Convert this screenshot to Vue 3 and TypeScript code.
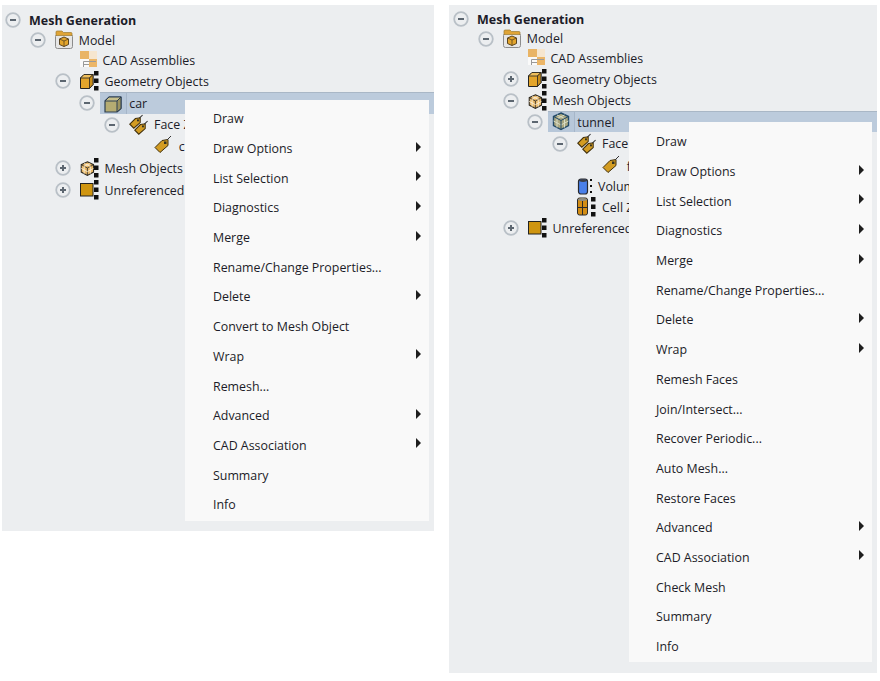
<script setup lang="ts">
interface Row {
  text: string
  level: number
  h: number
  toggle?: '+' | '-'
  icon?: string
  w?: number
  bold?: boolean
  sel?: boolean
}
interface Item { text: string; sub?: boolean }
interface Panel {
  id: string
  base: number
  rows: Row[]
  items: Item[]
}

const leftRows: Row[] = [
  { text: 'Mesh Generation', level: 0, h: 20, toggle: '-', bold: true },
  { text: 'Model', level: 1, h: 20, toggle: '-', icon: 'model', w: 24 },
  { text: 'CAD Assemblies', level: 2, h: 20, icon: 'cad', w: 23 },
  { text: 'Geometry Objects', level: 2, h: 22, toggle: '-', icon: 'geom', w: 25 },
  { text: 'car', level: 3, h: 22, toggle: '-', icon: 'car', w: 25, sel: true },
  { text: 'Face Zones', level: 4, h: 21, toggle: '-', icon: 'tags', w: 25 },
  { text: 'car', level: 5, h: 22, icon: 'tag', w: 25 },
  { text: 'Mesh Objects', level: 2, h: 22, toggle: '+', icon: 'mesh', w: 25 },
  { text: 'Unreferenced', level: 2, h: 22, toggle: '+', icon: 'unref', w: 25 }
]

const rightRows: Row[] = [
  { text: 'Mesh Generation', level: 0, h: 20, toggle: '-', bold: true },
  { text: 'Model', level: 1, h: 19, toggle: '-', icon: 'model', w: 24 },
  { text: 'CAD Assemblies', level: 2, h: 20, icon: 'cad', w: 23 },
  { text: 'Geometry Objects', level: 2, h: 22, toggle: '+', icon: 'geom', w: 25 },
  { text: 'Mesh Objects', level: 2, h: 21, toggle: '-', icon: 'mesh', w: 25 },
  { text: 'tunnel', level: 3, h: 21, toggle: '-', icon: 'tunnel', w: 25, sel: true },
  { text: 'Face Zones', level: 4, h: 23, toggle: '-', icon: 'tags', w: 25 },
  { text: 'fluid', level: 5, h: 22, icon: 'tag', w: 25 },
  { text: 'Volume Zones', level: 4, h: 19, icon: 'volume', w: 21 },
  { text: 'Cell Zones', level: 4, h: 22, icon: 'cell', w: 25 },
  { text: 'Unreferenced', level: 2, h: 20, toggle: '+', icon: 'unref', w: 25 }
]

const leftItems: Item[] = [
  { text: 'Draw' },
  { text: 'Draw Options', sub: true },
  { text: 'List Selection', sub: true },
  { text: 'Diagnostics', sub: true },
  { text: 'Merge', sub: true },
  { text: 'Rename/Change Properties...' },
  { text: 'Delete', sub: true },
  { text: 'Convert to Mesh Object' },
  { text: 'Wrap', sub: true },
  { text: 'Remesh...' },
  { text: 'Advanced', sub: true },
  { text: 'CAD Association', sub: true },
  { text: 'Summary' },
  { text: 'Info' }
]

const rightItems: Item[] = [
  { text: 'Draw' },
  { text: 'Draw Options', sub: true },
  { text: 'List Selection', sub: true },
  { text: 'Diagnostics', sub: true },
  { text: 'Merge', sub: true },
  { text: 'Rename/Change Properties...' },
  { text: 'Delete', sub: true },
  { text: 'Wrap', sub: true },
  { text: 'Remesh Faces' },
  { text: 'Join/Intersect...' },
  { text: 'Recover Periodic...' },
  { text: 'Auto Mesh...' },
  { text: 'Restore Faces' },
  { text: 'Advanced', sub: true },
  { text: 'CAD Association', sub: true },
  { text: 'Check Mesh' },
  { text: 'Summary' },
  { text: 'Info' }
]

const panels: Panel[] = [
  { id: 'left', base: 3, rows: leftRows, items: leftItems },
  { id: 'right', base: 4, rows: rightRows, items: rightItems }
]

const tagPath = 'M1 11.5 L8 4.5 L14 3.5 L14 9.5 L6 16.5 Z'
const hexPath = 'M9 1 L16.5 4.5 L16.5 13.5 L9 17.5 L1.5 13.5 L1.5 4.5 Z'
</script>

<template>
  <div class="page">
    <section v-for="p in panels" :key="p.id" class="panel" :class="p.id">
      <div
        v-for="(r, i) in p.rows"
        :key="i"
        class="row"
        :class="{ sel: r.sel }"
        :style="{ height: r.h + 'px', paddingLeft: p.base + r.level * 24.75 + 'px' }"
      >
        <svg v-if="r.toggle" class="toggle" width="16" height="16" viewBox="0 0 16 16">
          <circle cx="8" cy="8" r="6.8" fill="#eceef0" stroke="#b9c0c7" stroke-width="1.8" />
          <rect x="5" y="7" width="6" height="2" fill="#5c6670" />
          <rect v-if="r.toggle === '+'" x="7" y="5" width="2" height="6" fill="#5c6670" />
        </svg>
        <span v-else class="toggle" />
        <div class="body">
          <svg
            v-if="r.icon"
            class="icon"
            :width="r.w"
            height="20"
            :viewBox="`0 0 ${r.w} 20`"
          >
            <template v-if="r.icon === 'model'">
              <rect x="0.5" y="4.5" width="17" height="14" rx="2" fill="#e6e6e6" stroke="#8c8c8c" />
              <path d="M1 4.5 V2 Q1 1 2 1 H7 L8.5 2.5 H16 Q17 2.5 17 3.5 V5.5 H1 Z" fill="#dfa436" stroke="#9b7a30" stroke-width="0.7" />
              <path d="M4.5 9 L9 7 L13.5 9 V14.5 L9 16.5 L4.5 14.5 Z" fill="#e3a52c" stroke="#5b4520" />
              <path d="M4.5 9 L9 11 L13.5 9 M9 11 V16.5" fill="none" stroke="#5b4520" stroke-width="0.8" />
            </template>
            <template v-else-if="r.icon === 'cad'">
              <rect x="0" y="1" width="9" height="8" fill="#e9b465" />
              <rect x="9" y="1" width="8" height="8" fill="#f6e6cf" />
              <rect x="9" y="9" width="8" height="8" fill="#ecb668" />
              <rect x="0" y="9" width="9" height="8" fill="#fafafa" />
              <path d="M3.5 17 V11.5 H16 M3.5 14.5 H9" fill="none" stroke="#9a9a9a" />
            </template>
            <template v-else-if="r.icon === 'geom'">
              <path d="M0.5 7 L4 3.5 H13 V13.5 L9.5 17.5 H0.5 Z" fill="#e3a52c" stroke="#222" />
              <path d="M0.5 7 L4 3.5 H13 L9.5 7 Z" fill="#efbf5c" stroke="#222" stroke-width="0.8" />
              <path d="M9.5 7 L13 3.5 V13.5 L9.5 17.5 Z" fill="#c98e1c" stroke="#222" stroke-width="0.8" />
              <rect x="14" y="0" width="4.5" height="4.5" fill="#111" />
              <rect x="14" y="7.5" width="4.5" height="4.5" fill="#111" />
              <rect x="14" y="15" width="4.5" height="4.5" fill="#111" />
            </template>
            <template v-else-if="r.icon === 'car'">
              <path d="M1 7 L5 3 H17 V14.5 L13 18 H1 Z" fill="#b5ac72" stroke="#2c3e52" stroke-width="1.2" />
              <path d="M1 7 L5 3 H17 L13 7 Z" fill="#c7bf8b" stroke="#2c3e52" stroke-width="1" />
              <path d="M13 7 L17 3 V14.5 L13 18 Z" fill="#9c9460" stroke="#2c3e52" stroke-width="1" />
            </template>
            <template v-else-if="r.icon === 'tags'">
              <g transform="translate(0 0) scale(.8)">
                <path :d="tagPath" fill="#d39c22" stroke="#3f2e0a" stroke-width="1.3" />
                <rect x="10" y="5.5" width="2.4" height="2.4" fill="#332" />
                <path d="M13 4 L17 0" stroke="#333" stroke-width="1.3" />
              </g>
              <g transform="translate(5 6) scale(.8)">
                <path :d="tagPath" fill="#d39c22" stroke="#3f2e0a" stroke-width="1.3" />
                <rect x="10" y="5.5" width="2.4" height="2.4" fill="#332" />
                <path d="M13 4 L17 0" stroke="#333" stroke-width="1.3" />
              </g>
            </template>
            <template v-else-if="r.icon === 'tag'">
              <path :d="tagPath" fill="#d39c22" stroke="#3f2e0a" />
              <rect x="10" y="5.5" width="2.5" height="2.5" fill="#332" />
              <path d="M13 4 L17 0" stroke="#333" />
            </template>
            <template v-else-if="r.icon === 'mesh'">
              <g transform="translate(0 3) scale(.82)">
                <path :d="hexPath" fill="#e9b969" stroke="#2e2a22" stroke-width="1.3" />
                <path d="M1.5 4.5 L9 8.5 L16.5 4.5 M9 8.5 V17.5" fill="none" stroke="#2e2a22" />
                <path d="M5 3 L12.5 6.5 M12.5 3 L5 6.5 M5 6.5 V15.5 M12.5 6.5 V15.5 M1.5 9 L9 13 L16.5 9" fill="none" stroke="#fbf3df" />
              </g>
              <rect x="14" y="0" width="4.5" height="4.5" fill="#111" />
              <rect x="14" y="7.5" width="4.5" height="4.5" fill="#111" />
              <rect x="14" y="15" width="4.5" height="4.5" fill="#111" />
            </template>
            <template v-else-if="r.icon === 'tunnel'">
              <path :d="hexPath" fill="#a9a67f" stroke="#234a68" stroke-width="1.4" />
              <path d="M5 3 L12.5 6.5 M12.5 3 L5 6.5 M5 6.5 V15.5 M12.5 6.5 V15.5 M1.5 9 L9 13 L16.5 9" fill="none" stroke="#d9dcc6" />
              <path d="M1.5 4.5 L9 8.5 L16.5 4.5 M9 8.5 V17.5" fill="none" stroke="#234a68" />
            </template>
            <template v-else-if="r.icon === 'unref'">
              <rect x="0.5" y="3.5" width="12.5" height="12.5" fill="#cf9510" stroke="#222" />
              <rect x="14" y="0" width="4.5" height="4.5" fill="#111" />
              <rect x="14" y="7.5" width="4.5" height="4.5" fill="#111" />
              <rect x="14" y="15" width="4.5" height="4.5" fill="#111" />
            </template>
            <template v-else-if="r.icon === 'volume'">
              <rect x="1.5" y="2" width="9" height="15" rx="2.5" fill="#4a80ea" stroke="#27292e" stroke-width="1.2" />
              <path d="M2 4 Q6 6 10 4 V3 Q6 1 2 3 Z" fill="#3c3f48" />
              <rect x="13" y="2" width="2" height="2" fill="#111" />
              <rect x="13" y="8" width="2" height="2" fill="#111" />
              <rect x="13" y="14" width="2" height="2" fill="#111" />
            </template>
            <template v-else-if="r.icon === 'cell'">
              <rect x="0.5" y="1" width="10" height="17" rx="2" fill="#d38d14" stroke="#2a2a2a" />
              <path d="M1 3 Q5.5 5 10 3 V2 Q5.5 0 1 2 Z" fill="#8d8d85" />
              <path d="M5.5 4 V18 M1 10.5 H10" stroke="#2a2a2a" fill="none" />
              <rect x="14" y="0" width="4.5" height="4.5" fill="#111" />
              <rect x="14" y="7.5" width="4.5" height="4.5" fill="#111" />
              <rect x="14" y="15" width="4.5" height="4.5" fill="#111" />
            </template>
          </svg>
          <span class="label" :class="{ bold: r.bold }">{{ r.text }}</span>
        </div>
      </div>

      <ul class="menu">
        <li v-for="m in p.items" :key="m.text" class="item">
          <span>{{ m.text }}</span>
          <i v-if="m.sub" class="arrow" />
        </li>
      </ul>
    </section>
  </div>
</template>

<style scoped>
.page {
  display: flex;
  align-items: flex-start;
  gap: 15px;
  width: 880px;
  height: 681px;
  padding: 5px 0 0 2px;
  box-sizing: border-box;
  background: #fff;
  font-family: "Open Sans", "Noto Sans", sans-serif;
  font-size: 12.4px;
  color: #1c1c28;
  overflow: hidden;
}
.panel {
  position: relative;
  flex: none;
  background: #eceef0;
  box-sizing: border-box;
}
.panel.left {
  width: 432px;
  height: 526px;
  padding-top: 5px;
}
.panel.right {
  width: 428px;
  height: 668px;
  padding-top: 4px;
}
.row {
  display: flex;
  align-items: center;
  box-sizing: border-box;
}
.toggle {
  flex: none;
  display: block;
  width: 16px;
  height: 16px;
}
.body {
  flex: 1;
  display: flex;
  align-items: center;
  align-self: stretch;
  margin-left: 9px;
  min-width: 0;
}
.icon {
  flex: none;
  overflow: visible;
}
.label {
  white-space: nowrap;
}
.label.bold {
  font-size: 12.5px;
  font-weight: 700;
  margin-left: -1px;
}
.row.sel .body {
  margin-left: 5px;
  padding-left: 4px;
  background: #b7c7d9;
  border-top: 1px solid #a9b7c6;
}
.row.sel .label {
  flex: 1;
  align-self: stretch;
  display: flex;
  align-items: center;
  margin-left: -3px;
  padding-left: 2px;
  background: #bccbdc;
  border-left: 1px solid #a6b6c9;
}
.menu {
  position: absolute;
  top: 95px;
  left: 183px;
  width: 244px;
  height: 421px;
  margin: 0;
  padding: 4px 0 0;
  box-sizing: border-box;
  list-style: none;
  background: #f9f9f9;
}
.right .menu {
  top: 117px;
  left: 180px;
  width: 243px;
  height: 540px;
  padding-top: 5px;
}
.item {
  display: flex;
  align-items: center;
  justify-content: space-between;
  height: 29.7px;
  padding: 0 8px 0 28px;
  box-sizing: border-box;
  white-space: nowrap;
}
.right .item {
  padding-left: 27px;
}
.arrow {
  width: 0;
  height: 0;
  margin-top: -4px;
  border-left: 5px solid #1e1e1e;
  border-top: 5px solid transparent;
  border-bottom: 5px solid transparent;
}
</style>
